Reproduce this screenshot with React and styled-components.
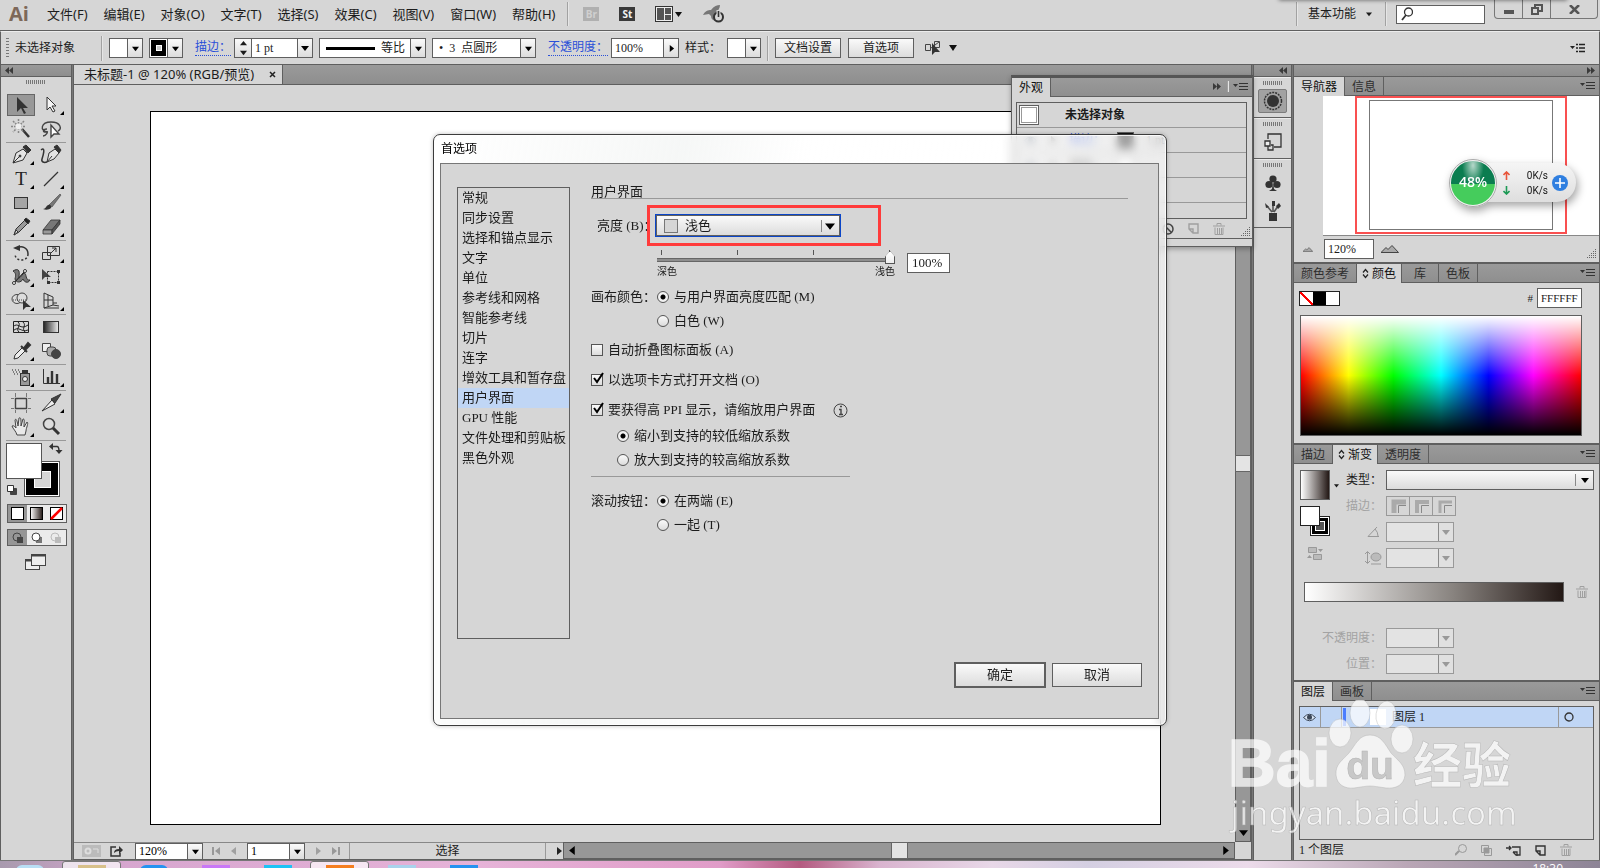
import React from "react";
import styled, { createGlobalStyle, css } from "styled-components";

const GlobalStyle = createGlobalStyle`
    * { box-sizing: border-box; }
    body {
        margin: 0;
        background: #d6d6d6;
        color: #1c1c1c;
        font: 12px/16px "Liberation Serif", "Noto Sans CJK SC", serif;
        overflow: hidden;
    }
    button, input, select { font: inherit; color: inherit; margin: 0; padding: 0; border-radius: 0; }
    button { background: none; border: 0; }
    svg { display: block; flex: none; }
`;

const line = "#5f5f5f";
const ui = `"Noto Sans", "Noto Sans CJK SC", sans-serif`;
const button = "linear-gradient(#fafafa, #dcdcdc)";
const bar = "linear-gradient(#9a9a9a, #8e8e8e)";

/* ---------- frame ---------- */

const Window = styled.div`
    position: relative;
    display: flex;
    flex-direction: column;
    min-height: 100vh;
    overflow: hidden;
    white-space: nowrap;
`;

const MenuBar = styled.header`
    display: flex;
    align-items: center;
    height: 31px;
    padding: 0 2px 2px 9px;
    border-bottom: 1px solid ${line};
    font-family: ${ui};
    font-size: 13px;
`;

const Logo = styled.b`
    width: 38px;
    color: #7d6859;
    font: bold 20px/28px "Open Sans", sans-serif;
`;

const Menus = styled.nav`
    display: flex;
    gap: 16px;
    margin-right: 12px;
`;

const Divider = styled.span`
    width: 2px;
    height: ${p => p.$h || 24}px;
    margin-left: ${p => p.$gap || 0}px;
    border-left: 1px solid #a2a2a2;
    border-right: 1px solid #e6e6e6;
`;

const Badge = styled.span`
    width: 16px;
    height: 14px;
    background: ${p => (p.$off ? "#b0b0b0" : "#3a3a3a")};
    color: ${p => (p.$off ? "#d0d0d0" : "#f2f2f2")};
    font: bold 10px/14px "Open Sans", sans-serif;
    text-align: center;
`;

const AppIcons = styled.div`
    display: flex;
    align-items: center;
    gap: 20px;
    margin-left: 14px;
    flex: 1;
`;

const Workspace = styled.button`
    display: flex;
    align-items: center;
    gap: 10px;
    padding: 0 13px 0 10px;
    font-size: 12px;
`;

const Search = styled.label`
    display: flex;
    align-items: center;
    width: 89px;
    height: 19px;
    margin: 0 9px;
    padding: 0 4px;
    border: 1px solid ${line};
    background: #fff;
    input { width: 60px; border: 0; outline: 0; }
`;

const WindowButtons = styled.div`
    display: flex;
    align-self: flex-start;
    height: 19px;
    border: 1px solid #777;
    border-top: 0;
    border-radius: 0 0 4px 4px;
    button { width: 28px; display: grid; place-items: center; border-right: 1px solid #777; }
    button:last-child { width: 46px; border: 0; }
`;

const ControlBar = styled.div`
    display: flex;
    align-items: center;
    height: 34px;
    padding: 0 14px 0 5px;
    border: 1px solid ${line};
    border-top-color: #ececec;
`;

const Grip = styled.span`
    width: ${p => (p.$v ? 3 : 20)}px;
    height: ${p => (p.$v ? 20 : 4)}px;
    background: repeating-linear-gradient(${p => (p.$v ? "180deg" : "90deg")}, #777 0 1px, transparent 1px ${p => (p.$v ? 3 : 2)}px);
`;

const Field = styled.span`
    display: flex;
    height: 20px;
    width: ${p => (p.$w ? p.$w + "px" : "auto")};
    border: 1px solid ${p => (p.$off ? "#999" : line)};
    background: ${p => (p.$off ? "#e3e3e3" : "#fff")};
    input { flex: 1; min-width: 0; width: 20px; border: 0; outline: 0; background: none; padding: 0 3px; }
`;

const Drop = styled.button`
    display: grid;
    place-items: center;
    width: 15px;
    height: 100%;
    border-left: 1px solid ${p => (p.$off ? "#8a8a8a" : line)};
    background: ${p => (p.$off ? "#e0e0e0" : button)};
    color: ${p => (p.$off ? "#999" : "#000")};
`;

const Stepper = styled.span`
    width: 17px;
    display: grid;
    place-items: center;
    align-content: space-evenly;
    border-right: 1px solid ${line};
    background: ${button};
`;

const Swatch = styled.span`
    flex: 1;
    display: grid;
    place-items: center;
    background: ${p => (p.$stroke ? "#000" : "#fff")};
    border: ${p => (p.$stroke ? "1px solid #fff" : 0)};
`;

const BlueLink = styled.a`
    color: #2a50d8;
    text-decoration: none;
    border-bottom: 1px dotted #2a50d8;
    line-height: 15px;
`;

const PushButton = styled.button`
    width: ${p => p.$w || 66}px;
    height: ${p => p.$h || 20}px;
    border: ${p => (p.$strong ? 2 : 1)}px solid ${line};
    background: ${button};
    font-size: ${p => p.$size || 12}px;
`;

const Controls = styled.div`
    display: flex;
    align-items: center;
    flex: 1;
    gap: 6px;
    > ${BlueLink} { margin: 0 -3px 0 6px; }
    > ${PushButton} { margin-right: 1px; }
`;

const Profile = styled.span`
    flex: 1;
    display: flex;
    align-items: center;
    gap: 6px;
    padding-left: 6px;
    line-height: 18px;
`;

const Main = styled.main`
    display: flex;
    flex: 1;
    border: solid ${line};
    border-width: 0 1px;
`;

const Split = styled.div`
    width: 3px;
    border: solid ${line};
    border-width: 0 1px;
    background: #777;
`;

const DockHead = styled.div`
    display: flex;
    align-items: center;
    justify-content: ${p => (p.$end ? "flex-end" : "flex-start")};
    height: 12px;
    padding: 0 4px;
    border-bottom: 1px solid ${line};
    background: ${bar};
`;

/* ---------- tools ---------- */

const ToolBox = styled.aside`
    width: 70px;
    display: flex;
    flex-direction: column;
`;

const ToolGroup = styled.div`
    display: grid;
    grid-template-columns: 30px 30px;
    justify-content: center;
    margin: 0 5px;
    border-bottom: 1px solid #999;
    padding-bottom: 1px;
`;

const ToolButton = styled.button`
    position: relative;
    height: 24px;
    display: grid;
    place-items: center;
    ${p => p.$on && css`
        background: #989898;
        box-shadow: inset 0 0 0 1px #666;
        height: 22px;
        margin: 1px;
    `}
    &::after {
        content: "";
        display: ${p => (p.$more ? "block" : "none")};
        position: absolute;
        right: 2px;
        bottom: 2px;
        border: 2px solid #000;
        border-top-color: transparent;
        border-left-color: transparent;
    }
`;

const FillStroke = styled.div`
    height: 58px;
    margin: 2px 5px 0;
`;

const Modes = styled.div`
    display: flex;
    height: ${p => p.$h}px;
    margin: 3px 4px 3px 6px;
    border: 1px solid ${line};
    background: #ebebeb;
    button { flex: 1; display: grid; place-items: center; }
    button:first-child { background: #969696; }
`;

const Screen = styled.button`
    margin: 5px auto 0;
`;

const GripRow = styled.div`
    display: flex;
    justify-content: center;
    padding: 3px 0 ${p => p.$b || 0}px;
`;

/* ---------- document ---------- */

const Document = styled.section`
    display: flex;
    flex-direction: column;
    flex: 1;
    min-width: 0;
`;

const DocTabs = styled.div`
    display: flex;
    height: 20px;
    border-bottom: 1px solid ${line};
    background: ${bar};
`;

const DocTab = styled.div`
    display: flex;
    align-items: center;
    justify-content: space-between;
    width: 209px;
    height: 19px;
    padding: 0 6px 0 10px;
    border-right: 1px solid ${line};
    background: #d6d6d6;
    font: 13px/19px ${ui};
`;

const CanvasRow = styled.div`
    display: flex;
    flex: 1;
`;

const Canvas = styled.div`
    flex: 1;
    display: flex;
    padding: 26px 74px 17px 76px;
`;

const Artboard = styled.div`
    flex: 1;
    border: 1px solid #000;
    background: #fff;
`;

const Scrollbar = styled.div`
    display: flex;
    flex-direction: ${p => (p.$v ? "column" : "row")};
    align-items: center;
    ${p => (p.$v ? "width: 16px;" : "flex: 1;")}
    border: 1px solid ${line};
    background: #979797;
    padding: ${p => (p.$v ? "13px 0 4px" : "0 4px")};
    i {
        background: #e4e4e4;
        outline: 1px solid #666;
        width: ${p => (p.$v ? 14 : 15)}px;
        height: 15px;
        margin: ${p => (p.$v ? "auto 0" : "0 auto")};
    }
`;

const Status = styled.div`
    display: flex;
    height: 18px;
    border-bottom: 1px solid ${line};
`;

const StatusInfo = styled.div`
    display: flex;
    align-items: center;
    width: 489px;
    padding-left: 8px;
    border-top: 1px solid #888;
    gap: 9px;
    color: #a0a0a0;
    ${Field} { height: 17px; color: #000; }
    ${Field}:first-of-type { margin-left: 2px; }
`;

const StatusText = styled.span`
    flex: 1;
    text-align: center;
    color: #222;
    border: solid #999;
    border-width: 0 1px;
`;

const Corner = styled.div`
    width: 16px;
`;

/* ---------- panels ---------- */

const IconDock = styled.aside`
    width: 37px;
`;

const IconGroup = styled.div`
    display: flex;
    flex-direction: column;
    align-items: center;
    gap: 4px;
    padding: 3px 0 4px;
    border-bottom: 1px solid ${line};
    border-top: 1px solid #ebebeb;
    button { width: 29px; height: 24px; display: grid; place-items: center; border-radius: 2px; }
    button.on { background: #a2a2a2; border: 1px solid #7c7c7c; }
`;

const Panels = styled.aside`
    width: 305px;
    display: flex;
    flex-direction: column;
`;

const Panel = styled.section`
    display: flex;
    flex-direction: column;
    ${p => p.$grow && "flex: 1;"}
    border-bottom: ${p => (p.$grow ? 0 : 2)}px solid ${line};
`;

const TabBar = styled.div`
    display: flex;
    align-items: flex-start;
    height: 19px;
    background: ${bar};
    box-shadow: inset 0 -1px ${line};
    font: 12px/17px ${ui};
    > svg { margin: 5px 4px 0 auto; }
`;

const Tab = styled.button`
    display: flex;
    align-items: center;
    gap: 3px;
    height: ${p => (p.$on ? 19 : 18)}px;
    padding: 0 ${p => p.$pad || 7}px;
    border-right: 1px solid ${line};
    background: ${p => (p.$on ? "#d6d6d6" : "transparent")};
    color: ${p => (p.$on ? "#111" : "#2e2e2e")};
`;

const NavView = styled.div`
    margin-left: 29px;
    padding: 0 32px 1px;
    height: 140px;
    background: #fff;
    border-bottom: 1px solid #888;
    > div { height: 138px; border: 2px solid #f95050; padding: 2px 12px; }
    > div > div { height: 130px; border: 1px solid #777; }
`;

const NavZoom = styled.div`
    display: flex;
    align-items: center;
    gap: 7px;
    height: 26px;
    padding: 0 2px 0 9px;
    > svg:first-child { margin-right: 4px; }
    > svg:last-child { margin: 10px 0 0 auto; }
`;

const Between = styled.div`
    display: flex;
    justify-content: space-between;
    align-items: center;
`;

const ColorBody = styled.div`
    padding: 5px 17px 7px 6px;
`;

const Chips = styled.span`
    display: flex;
    border: 1px solid #222;
    width: 41px;
    height: 15px;
    margin-left: -1px;
    span { flex: 1; }
    span:nth-child(1) { background: linear-gradient(-45deg, #fff 44%, #f00 44% 56%, #fff 56%); transform: scaleX(-1); }
    span:nth-child(2) { background: #000; }
    span:nth-child(3) { background: #fff; }
`;

const Hex = styled.label`
    display: flex;
    align-items: center;
    gap: 4px;
    font-size: 11px;
`;

const Spectrum = styled.div`
    height: 121px;
    margin-top: 7px;
    border: 1px solid ${line};
    background:
        linear-gradient(#fff, rgba(255, 255, 255, 0) 50%),
        linear-gradient(rgba(0, 0, 0, 0) 50%, #000),
        linear-gradient(90deg, #f00, #ff0 17%, #0f0 33%, #0ff 50%, #00f 67%, #f0f 83%, #f00);
`;

const GradientBody = styled.div`
    padding: 6px 5px 6px 6px;
`;

const GradientTop = styled.div`
    display: flex;
    margin-bottom: 14px;
`;

const GradientSide = styled.div`
    width: 40px;
    display: flex;
    flex-direction: column;
    gap: 6px;
`;

const GradientSwatch = styled.div`
    display: flex;
    align-items: center;
    gap: 4px;
    span { width: 30px; height: 30px; border: 1px solid ${line}; background: linear-gradient(90deg, #fff, #231815); }
`;

const Rows = styled.div`
    flex: 1;
    display: flex;
    flex-direction: column;
    gap: 6px;
`;

const Row = styled.label`
    display: flex;
    align-items: center;
    gap: 4px;
    height: 20px;
    color: ${p => (p.$off ? "#a3a3a3" : "#1c1c1c")};
    > span:first-child { width: ${p => p.$label || 42}px; display: flex; justify-content: flex-end; }
`;

const SelectWrap = styled.span`
    position: relative;
    display: flex;
    align-items: center;
    flex: ${p => (p.$w ? "none" : 1)};
    width: ${p => (p.$w ? p.$w + "px" : "auto")};
    select {
        appearance: none;
        width: 100%;
        height: ${p => p.$h || 20}px;
        border: 1px solid ${line};
        outline: ${p => (p.$focus ? "1px solid #0b46c8" : 0)};
        background: ${button};
        padding-left: ${p => (p.$focus ? 28 : 4)}px;
    }
    > svg { position: absolute; right: 5px; }
    > i { position: absolute; left: 8px; width: 14px; height: 14px; border: 1px solid #777; background: #d6d6d6; }
    &::after { content: ""; position: absolute; right: 18px; height: 12px; border-left: 1px solid #888; }
`;

const StrokeButtons = styled.span`
    display: flex;
    border: 1px solid #999;
    button { width: 22px; height: 18px; display: grid; place-items: center; }
    button + button { width: 23px; border-left: 1px solid #999; }
`;

const Ramp = styled.div`
    display: flex;
    align-items: center;
    gap: 12px;
    padding: 0 6px 0 4px;
    margin-bottom: 26px;
    span { flex: 1; height: 20px; border: 1px solid ${line}; background: linear-gradient(90deg, #fff, #898480 57%, #231815); }
`;

const LayersBody = styled.div`
    flex: 1;
    display: flex;
    flex-direction: column;
    padding: 5px 5px 0;
`;

const LayerList = styled.div`
    flex: 1;
    border: 1px solid ${line};
`;

const Layer = styled.div`
    display: flex;
    align-items: center;
    height: 21px;
    padding-left: 3px;
    background: #c0d6f5;
    border-bottom: 1px solid #999;
    > i { width: 3px; height: 18px; background: #4a7dff; margin: 0 24px 0 1px; }
    > b { width: 16px; height: 16px; background: #fff; margin-right: 6px; }
    > span { flex: 1; }
`;

const LayerCell = styled.div`
    width: ${p => p.$w}px;
    height: 20px;
    display: flex;
    align-items: center;
    padding-left: ${p => p.$pad || 0}px;
    border: solid #999;
    border-width: ${p => (p.$left ? "0 0 0 1px" : "0 1px 0 0")};
`;

const LayerFoot = styled.div`
    display: flex;
    align-items: center;
    height: 20px;
    padding-right: 22px;
    gap: 14px;
    color: #a0a0a0;
    > span { flex: 1; color: #222; }
`;

/* ---------- appearance panel ---------- */

const Floating = styled.section`
    position: absolute;
    top: 75px;
    right: 347px;
    width: 242px;
    border: 1px solid ${line};
    border-top: 3px solid #555;
    background: #d6d6d6;
    box-shadow: 0 2px 5px rgba(0, 0, 0, .3);
`;

const AppearanceList = styled.div`
    margin: 5px 5px 0 4px;
    border: 1px solid ${line};
`;

const AppearanceRow = styled.div`
    display: flex;
    align-items: center;
    gap: 12px;
    height: ${p => p.$h || 25}px;
    padding-left: ${p => p.$pad || 2}px;
    border-bottom: ${p => (p.$h ? 0 : 1)}px solid #999;
    > i { width: 20px; height: 20px; background: #fff; border: 1px solid ${line}; box-shadow: inset 0 0 0 1px #fff, inset 0 0 0 2px #999; margin-right: 14px; }
    > em { width: 17px; height: 17px; border: 1px solid ${line}; background: ${p => p.$paint || "#fff"}; }
`;

const AppearanceFoot = styled.div`
    display: flex;
    align-items: center;
    justify-content: flex-end;
    gap: 14px;
    height: 20px;
    padding-right: 1px;
    border-bottom: 1px solid ${line};
    margin-bottom: 7px;
    > svg:last-child { margin: 6px 0 0 2px; }
`;

const PanelTools = styled.span`
    display: flex;
    align-items: center;
    gap: 6px;
    height: 17px;
    margin-left: auto;
    & + svg { margin-left: 4px; }
`;

const BlueText = styled.span`
    color: #2a50d8;
`;

/* ---------- dialog ---------- */

const Dialog = styled.div`
    position: absolute;
    top: 134px;
    left: 0;
    right: 0;
    width: 734px;
    margin: 0 auto;
    padding: 0 7px 6px 6px;
    border: 1px solid #3c3c3c;
    border-radius: 7px;
    background: linear-gradient(100deg, rgba(255, 255, 255, .85), rgba(242, 244, 243, .7) 30%, rgba(255, 255, 255, .8) 45%, rgba(255, 255, 255, .5));
    backdrop-filter: blur(4px);
    box-shadow: inset 0 0 0 1px rgba(255, 255, 255, .8), 0 0 4px rgba(0, 0, 0, .25);
    font-size: 13px;
`;

const DialogTitle = styled.h1`
    margin: 0;
    padding-left: 1px;
    font: 12px/28px ${ui};
    color: #000;
`;

const DialogBody = styled.div`
    display: flex;
    height: 556px;
    padding: 23px 16px 30px;
    border: 1px solid #777;
    background: #d6d6d6;
`;

const Sections = styled.ul`
    width: 113px;
    height: 452px;
    margin: 0 21px 0 0;
    padding: 0;
    border: 1px solid ${line};
    list-style: none;
    li { height: 20px; line-height: 20px; padding-left: 4px; }
    li[aria-current] { background: #c0d6f5; }
`;

const Form = styled.form`
    flex: 1;
    display: flex;
    flex-direction: column;
`;

const Legend = styled.h2`
    margin: -5px 14px 6px 0;
    height: 17px;
    font: inherit;
    line-height: 20px;
    border-bottom: 1px solid #999;
`;

const Line = styled.div`
    display: flex;
    align-items: center;
    height: 24px;
    padding-left: ${p => p.$indent || 0}px;
    margin-top: ${p => p.$top || 0}px;
    > span:first-child { width: 66px; }
`;

const Brightness = styled.div`
    display: flex;
    align-items: center;
    height: 41px;
    padding-left: 6px;
    > label { width: 50px; }
`;

const Highlight = styled.div`
    width: 234px;
    height: 41px;
    padding: 7px 6px;
    border: 3px solid #ff3b3b;
`;

const SliderRow = styled.div`
    display: flex;
    margin: 3px 0 6px 66px;
    gap: 12px;
    ${Field} { margin-top: 4px; }
    ${Field} input { padding: 0 4px; }
`;

const Slider = styled.label`
    display: block;
    width: 238px;
    font-size: 10px;
    line-height: 14px;
    input {
        display: block;
        appearance: none;
        width: 238px;
        height: 15px;
        margin-top: 1px;
        background:
            repeating-linear-gradient(90deg, transparent 0 4px, #555 4px 5px, transparent 5px 76px) 0 0 / 100% 5px no-repeat,
            linear-gradient(#666 1px, #8e8e8e 1px 3px, #666 3px) 0 8px / 100% 4px no-repeat;
    }
    input::-webkit-slider-thumb {
        appearance: none;
        width: 10px;
        height: 13px;
        background: linear-gradient(#fff, #eee) content-box, #555;
        padding: 1px;
        clip-path: polygon(50% 0, 100% 45%, 100% 100%, 0 100%, 0 45%);
    }
`;

const Radio = styled.input.attrs({ type: "radio" })`
    appearance: none;
    width: 12px;
    height: 12px;
    border: 1px solid #555;
    border-radius: 6px;
    background: ${button};
    &:checked { background: radial-gradient(#000 0 2px, #f2f2f2 3px); }
`;

const CheckBox = styled.span`
    position: relative;
    display: flex;
    input { appearance: none; width: 12px; height: 12px; border: 1px solid #555; background: ${button}; }
    svg { position: absolute; left: 1px; top: -2px; }
`;

const Choice = styled.label`
    display: flex;
    align-items: center;
    gap: 5px;
    margin-right: 18px;
`;

const Rule = styled.hr`
    width: 259px;
    margin: 4px 0 0;
    border: 0;
    border-top: 1px solid #999;
`;

const Actions = styled.div`
    display: flex;
    align-items: center;
    justify-content: flex-end;
    gap: 6px;
    margin-top: auto;
`;

/* ---------- overlays ---------- */

const Meter = styled.div`
    position: absolute;
    top: 158px;
    right: 24px;
    display: flex;
    align-items: center;
    width: 127px;
    height: 49px;
    filter: drop-shadow(2px 4px 4px rgba(0, 0, 0, .35));
    font: 10px/15px "Roboto", sans-serif;
`;

const MeterBall = styled.b`
    position: relative;
    width: 48px;
    height: 48px;
    border: 2px solid #f2f2f2;
    border-radius: 24px;
    outline: 1px solid #aaa;
    outline-offset: -1px;
    background: radial-gradient(ellipse at 50% 10%, rgba(255, 255, 255, .7), transparent 35%), linear-gradient(#0b7d50 52%, #45cc5c 52%);
    color: #fff;
    font: 600 14px/42px "Open Sans", sans-serif;
    text-align: center;
`;

const MeterPill = styled.div`
    flex: 1;
    display: flex;
    align-items: center;
    height: 39px;
    margin-left: -20px;
    padding: 1px 8px 0 26px;
    border-radius: 0 20px 20px 0;
    background: linear-gradient(#f5f5f5, #dedede);
    gap: 4px;
    > div { flex: 1; }
`;

const Speed = styled.div`
    display: flex;
    justify-content: space-between;
    align-items: center;
    color: #111;
`;

const Plus = styled.button`
    width: 16px;
    height: 16px;
    border-radius: 8px;
    background: #2f7fe0;
    display: grid;
    place-items: center;
`;

const Watermark = styled.div`
    position: absolute;
    right: 82px;
    bottom: 24px;
    width: 290px;
    opacity: .72;
    pointer-events: none;
`;

const TopShade = styled.div`
    position: absolute;
    top: -4px;
    right: 33px;
    width: 288px;
    height: 4px;
    box-shadow: 0 0 4px rgba(0, 0, 0, .6);
`;

const Taskbar = styled.footer`
    display: flex;
    height: 8px;
    overflow: hidden;
    border-top: 1px solid #777;
    background: linear-gradient(90deg, #a89aae, #d7a6cf 8%, #e6b3d8 30%, #e09cc8 45%, #b45a80 50%, #d9b4cf 55%, #e8d8e8 62%, #d4cfe2 68%, #ecdbea 78%, #b9a6b6 88%, #8d8496);
    color: #fff;
    font: 12px/15px "Open Sans", sans-serif;
`;

const TaskItem = styled.span`
    width: 59px;
    height: 12px;
    margin-right: 3px;
    border: 1px solid ${p => (p.$on ? "#777" : "transparent")};
    border-radius: 3px 3px 0 0;
    background: ${p => (p.$on ? "rgba(255, 255, 255, .7)" : "none")};
    display: flex;
    justify-content: center;
    align-items: flex-start;
    i { margin-top: 3px; width: 28px; height: 12px; background: ${p => p.$c}; border-radius: ${p => (p.$round ? 14 : 0)}px; }
`;

const Clock = styled.span`
    margin-left: auto;
    padding-right: 37px;
`;

/* ---------- drawings ---------- */

const Caret = ({ w = 8, color = "currentColor", dir = "down" }) => {
    const turn = { down: 0, right: -90, left: 90, up: 180 }[dir];
    return (
        <svg width={w} height={w} viewBox="0 0 8 8">
            <path d="M0 2h8L4 7z" fill={color} transform={`rotate(${turn} 4 4)`} />
        </svg>
    );
};

const Chevrons = ({ flip }) => (
    <svg width="8" height="7" viewBox="0 0 8 7">
        <path d="M4 0v7L0 3.5zM8 0v7L4 3.5z" fill="#3a3a3a" transform={flip ? "matrix(-1 0 0 1 8 0)" : undefined} />
    </svg>
);

const PanelMenu = () => (
    <svg width="15" height="9" viewBox="0 0 15 9">
        <path d="M0 1h5L2.500 4z" fill="#333" />
        <path d="M6 .5h9M6 3.500h9M6 6.500h9" stroke="#333" />
    </svg>
);

const Corners = () => (
    <svg width="10" height="10" viewBox="0 0 10 10" fill="#666">
        {[0, 1, 2, 3, 4].map(r => Array.from({ length: r + 1 }, (_, i) => (
            <rect key={`${r}-${i}`} x={8 - i * 2} y={r * 2} width="1" height="1" />
        )))}
    </svg>
);

const Trash = ({ s = 12, color = "#a0a0a0" }) => (
    <svg width={s} height={s} viewBox="0 0 12 12" fill="none" stroke={color}>
        <path d="M0 3h12M4 2.500V.5h4v2M2 4.500V11.500h8V4.500M4.500 5v6M6.500 5v6M8.500 5v6" />
    </svg>
);

const NewIcon = ({ color = "#333" }) => (
    <svg width="11" height="11" viewBox="0 0 11 11" fill="none" stroke={color} strokeWidth="1.400">
        <path d="M1 1h9v9H5L1 6zM1 6h4v4" />
    </svg>
);

const Eye = () => (
    <svg width="13" height="9" viewBox="0 0 13 9">
        <path d="M.5 4.500Q6.500-2 12.500 4.500 6.500 11 .5 4.500z" fill="#d8e4f4" stroke="#3b4656" />
        <circle cx="6.500" cy="4.300" r="2.500" fill="#3b4656" />
    </svg>
);

const UpDown = () => (
    <svg width="7" height="11" fill="none" stroke="#222" strokeWidth="1.200">
        <path d="M1 4.500L3.500 1.500 6 4.500M1 6.500L3.500 9.500 6 6.500" />
    </svg>
);

const Mountains = ({ w, h }) => (
    <svg width={w} height={h} viewBox="0 0 18 8"><path d="M0 7.500l5-5 2 2L11 .5l6.500 7z" fill="#aaa" stroke="#444" /></svg>
);

const Arrow = ({ color, down }) => (
    <svg width="7" height="9" viewBox="0 0 7 9" fill="none" stroke={color} strokeWidth="1.600">
        <path d={down ? "M3.500 0v8M.5 5l3 3 3-3" : "M3.500 9V1M.5 4l3-3 3 3"} />
    </svg>
);

const toolShapes = {
    select: <path d="M8 3v15l4-4 3 6 2-1-3-5h5z" fill="#333" />,
    direct: <path d="M8 4v13l3-3 3 5 2-1-3-5h4z" fill="#f5f5f5" stroke="#333" />,
    wand: <g><path d="M13 12l7 8" stroke="#333" strokeWidth="2.500" /><path d="M9.500 2v15M2 9.500h15M4 4l11 11M15 4L4 15" stroke="#888" strokeWidth="1.500" strokeDasharray="2 1" /><circle cx="9.500" cy="9.500" r="3" fill="#eee" /></g>,
    lasso: <g fill="none" stroke="#444" strokeWidth="1.400"><path d="M9 15C0 14 2 5 12 5s11 7 7 9M8 12c-5 0-4 4-1 3s0 4-3 4" /><path d="M12 8v12l3-3h5z" fill="#fff" /></g>,
    pen: <g stroke="#333" fill="#e4e4e4"><path d="M4 20l3-10 7-4 4 4-4 7z" /><path d="M4 20l6-6" /><circle cx="11" cy="13" r="1" fill="#333" /><path d="M14 4l3-2 5 5-3 3z" fill="#333" /></g>,
    curve: <g stroke="#333" fill="#e4e4e4"><path d="M2 7c5-4 2 6 1 9s2 4 5 3" fill="none" strokeWidth="1.500" /><path d="M8 19l2-9 6-4 4 4-5 6z" /><path d="M8 19l5-6" /><path d="M15 4l3-2 4 5-2 3z" fill="#333" /></g>,
    line: <path d="M5 19L19 5" stroke="#333" strokeWidth="1.300" />,
    rect: <rect x="5.500" y="6.500" width="13" height="11" fill="#a5a5a5" stroke="#333" />,
    brush: <g><path d="M10 14L21 3l1 1-9 12z" fill="#777" stroke="#444" strokeWidth=".6" /><path d="M4 18c4 0 3-5 7-4 4 3-2 6-7 4z" fill="#333" /></g>,
    pencil: <g stroke="#333"><path d="M5 20l2-6L16 5l3 3-9 9z" fill="#999" /><path d="M15 5l2-2 4 3-2 3z" fill="#222" /><path d="M5 20l2-5 2 2z" fill="#eee" /></g>,
    eraser: <g stroke="#333" strokeWidth=".8"><path d="M4 15L12 5h9l-8 10z" fill="#777" /><path d="M4 15h9v4H4z" fill="#999" /><path d="M13 15l8-10v4l-8 10z" fill="#555" /></g>,
    rotate: <g fill="none" stroke="#333" strokeWidth="1.500"><path d="M8 7c5-3 11 0 11 6" /><path d="M19 13c0 8-13 8-13 0" strokeDasharray="2 2" /><path d="M4 7l7-3v6z" fill="#333" stroke="none" /></g>,
    scale: <g fill="none" stroke="#333"><path d="M3.500 11.500h8v7h-8z" /><path d="M8.500 5.500h12v9h-12z" /><path d="M12 12l5-5M13 7h4v4" /></g>,
    warp: <g fill="none" stroke="#333"><path d="M4 6c5-3 7-1 6 5 0 5 3-2 5-3 3 0 1 8 6 7-2 4-6 2-7-1-2 4-7 4-8 0 1-4 1-6-2-8z" fill="#777" /><path d="M4 19L16 6" stroke="#111" /><circle cx="16" cy="6" r="1.500" fill="#fff" /><circle cx="5" cy="18" r="1.500" fill="#fff" /></g>,
    free: <g><path d="M3 4v11l3-3h6z" fill="#444" /><path d="M8.500 6.500h11v11h-11z" fill="none" stroke="#333" strokeDasharray="2 1" /><path d="M8 16h3v3H8zM18 5h3v3h-3zM18 16h3v3h-3z" fill="#333" /></g>,
    shape: <g fill="#ddd" stroke="#444"><ellipse cx="8" cy="10" rx="5" ry="4.500" /><ellipse cx="13" cy="9" rx="5" ry="5" /><path d="M4 11h13" strokeDasharray="1 1" /><path d="M14 11v10l3-3h5z" fill="#333" stroke="none" /></g>,
    persp: <g fill="none" stroke="#333"><path d="M5 4v15l15 0M5 4l9 4v8l-9 3M9 6v11M5 11h9M14 16l6 1M14 14h4" /></g>,
    mesh: <g fill="none" stroke="#222"><path d="M4.500 6.500h15v11h-15z" /><path d="M4 12c5-6 7 4 15-2M4 16c6-6 8 2 15-1M9 7c4 3-3 7 1 10M14 7c4 4-2 6 2 10" /></g>,
    grad: <g><defs><linearGradient id="toolGrad"><stop stopColor="#222" /><stop offset="1" stopColor="#eee" /></linearGradient></defs><rect x="4.500" y="6.500" width="15" height="11" fill="url(#toolGrad)" stroke="#333" /></g>,
    drop: <g stroke="#333"><path d="M5 20l1-4 8-8 3 3-8 8z" fill="#eee" /><path d="M12 7l6 6M15 9l4-5 2 2-4 4z" fill="#222" strokeWidth="2" /></g>,
    blend: <g stroke="#444"><path d="M3.500 4.500h8v8h-8z" fill="#eee" /><rect x="8" y="8" width="9" height="9" rx="3" fill="#aaa" /><circle cx="17" cy="15" r="4.500" fill="#444" /></g>,
    spray: <g><rect x="11.500" y="8.500" width="9" height="12" fill="#999" stroke="#333" /><path d="M13 5h6v3h-6z" fill="#333" /><circle cx="16" cy="14" r="2.500" fill="#eee" stroke="#333" /><path d="M3 5h9M4 7h8M5 9h5" stroke="#222" strokeDasharray="1 2" /></g>,
    chart: <g fill="none" stroke="#333"><path d="M4.500 4v14.500H21" /><path d="M9 18v-6M13 18V6M18 18V9" strokeWidth="2.400" /></g>,
    art: <g fill="none" stroke="#444"><path d="M6.500 7.500h11v10h-11z" strokeWidth="1.400" /><path d="M6.500 2v4M17.500 2v4M6.500 19v3M17.500 19v3M2 7.500h3M19 7.500h3M2 17.500h3M19 17.500h3" stroke="#777" /></g>,
    slice: <g stroke="#333"><path d="M3 20L13 9l3 4z" fill="#eee" /><path d="M12 8l10-5-6 9z" fill="#444" /></g>,
    hand: <path d="M8 20c-1-4-4-6-5-9 2-1 3 1 4 2L6 5c1-2 2 0 3 6l1-8c2-1 2 1 2 8l2-7c2 0 1 2 1 8l3-5c2 1-1 6-1 9l-1 4z" fill="#e9e9e9" stroke="#444" />,
    zoom: <g><circle cx="10" cy="9" r="5.500" fill="#ddd" stroke="#444" strokeWidth="1.500" /><path d="M14 13l6 6" stroke="#333" strokeWidth="3" /></g>
};

const ToolIcon = ({ name }) => (
    <svg width="24" height="24" viewBox="0 0 24 24">
        {name === "type"
            ? <text x="12" y="18" textAnchor="middle" fontFamily="Liberation Serif" fontSize="19" fill="#222">T</text>
            : toolShapes[name]}
    </svg>
);

const toolGroups = [
    [["select", "选择"], ["direct", "直接选择", 1], ["wand", "魔棒"], ["lasso", "套索"]],
    [["pen", "钢笔", 1], ["curve", "曲率"], ["type", "文字", 1], ["line", "直线段", 1], ["rect", "矩形", 1], ["brush", "画笔", 1], ["pencil", "铅笔", 1], ["eraser", "橡皮擦", 1]],
    [["rotate", "旋转", 1], ["scale", "比例缩放", 1], ["warp", "宽度", 1], ["free", "自由变换"], ["shape", "形状生成器", 1], ["persp", "透视网格", 1]],
    [["mesh", "网格"], ["grad", "渐变"], ["drop", "吸管", 1], ["blend", "混合"]],
    [["spray", "符号喷枪", 1], ["chart", "柱形图", 1]],
    [["art", "画板"], ["slice", "切片", 1], ["hand", "抓手", 1], ["zoom", "缩放"]]
];

const menus = ["文件(F)", "编辑(E)", "对象(O)", "文字(T)", "选择(S)", "效果(C)", "视图(V)", "窗口(W)", "帮助(H)"];

const sections = ["常规", "同步设置", "选择和锚点显示", "文字", "单位", "参考线和网格", "智能参考线", "切片", "连字",
    "增效工具和暂存盘", "用户界面", "GPU 性能", "文件处理和剪贴板", "黑色外观"];

const Tools = () => (
    <ToolBox>
        <DockHead><Chevrons /></DockHead>
        <GripRow $b={9}><Grip /></GripRow>
        {toolGroups.map((group, g) => (
            <ToolGroup key={g}>
                {group.map(([name, label, more]) => (
                    <ToolButton key={name} aria-label={label} $on={name === "select"} $more={more}>
                        <ToolIcon name={name} />
                    </ToolButton>
                ))}
            </ToolGroup>
        ))}
        <FillStroke>
            <svg width="60" height="56" viewBox="0 0 60 56">
                <rect x="18.500" y="18.500" width="35" height="35" fill="#fff" stroke="#555" />
                <rect x="20" y="20" width="32" height="32" />
                <rect x="28.500" y="28.500" width="16" height="16" fill="#d6d6d6" stroke="#fff" />
                <rect x=".5" y=".5" width="35" height="35" fill="#fff" stroke="#555" />
                <path d="M46 3.500h5q2 0 2 5" fill="none" stroke="#333" strokeWidth="1.500" />
                <path d="M47 0v7l-4-3.500zM49.500 7h7L53 11z" fill="#333" />
                <path d="M4.500 45.500h6v6h-6z" fill="#444" stroke="#444" />
                <path d="M1.500 42.500h6v6h-6z" fill="#fff" stroke="#333" />
            </svg>
        </FillStroke>
        <Modes $h={19}>
            <button aria-label="颜色"><svg width="13" height="13"><rect x=".5" y=".5" width="12" height="12" fill="#fff" stroke="#000" /></svg></button>
            <button aria-label="渐变"><svg width="13" height="13"><defs><linearGradient id="modeGrad"><stop stopColor="#fff" /><stop offset="1" stopColor="#231815" /></linearGradient></defs><rect x=".5" y=".5" width="12" height="12" fill="url(#modeGrad)" stroke="#000" /></svg></button>
            <button aria-label="无"><svg width="13" height="13"><rect x=".5" y=".5" width="12" height="12" fill="#fff" stroke="#000" /><path d="M1 12L12 1" stroke="#f00" strokeWidth="2.500" /></svg></button>
        </Modes>
        <Modes $h={17}>
            {["#444", "#777", "#bbb"].map((c, i) => (
                <button key={c} aria-label={["正常绘图", "背面绘图", "内部绘图"][i]}>
                    <svg width="12" height="12">
                        <rect x="5" y="5" width="6" height="6" fill={c} />
                        <circle cx="5" cy="5" r="4" fill={i === 1 ? "#fff" : "none"} stroke={i === 2 ? "#bbb" : "#444"} />
                    </svg>
                </button>
            ))}
        </Modes>
        <Screen aria-label="屏幕模式">
            <svg width="22" height="17" fill="#eee" stroke="#444">
                <rect x=".5" y="5.500" width="14" height="10" /><path d="M0 6.500h15" strokeWidth="2" />
                <rect x="6.500" y=".5" width="14" height="11" /><path d="M6 1.500h15" strokeWidth="2" />
            </svg>
        </Screen>
    </ToolBox>
);

const TopBars = () => (
    <>
        <MenuBar>
            <Logo>Ai</Logo>
            <Menus>{menus.map(m => <span key={m}>{m}</span>)}</Menus>
            <Divider />
            <AppIcons>
                <Badge $off>Br</Badge>
                <Badge>St</Badge>
                <svg width="28" height="16" viewBox="0 0 28 16">
                    <rect x=".5" y=".5" width="17" height="15" fill="#eee" stroke="#333" />
                    <path d="M2 2h7v12H2zM10 2h6v6h-6zM10 9h6v5h-6z" fill="#555" />
                    <path d="M20 6h7l-3.500 5z" fill="#111" />
                </svg>
                <svg width="22" height="18" viewBox="0 0 22 18">
                    <path d="M0 10C2 6 5 5 8 5c3-4 6-5 9-5 0 3-2 6-5 9v7c-3-1-4-3-4-5L6 9z" fill="#777" />
                    <circle cx="15.500" cy="12" r="4.500" fill="#d6d6d6" stroke="#333" strokeWidth="2" />
                    <path d="M15.500 5v8" stroke="#d6d6d6" strokeWidth="4" /><path d="M15.500 6v6" stroke="#333" strokeWidth="1.600" />
                </svg>
            </AppIcons>
            <Divider />
            <Workspace>基本功能<Caret w={6} /></Workspace>
            <Divider />
            <Search>
                <svg width="12" height="14" viewBox="0 0 12 14" fill="none" stroke="#333" strokeWidth="1.300"><circle cx="7.500" cy="5" r="4" /><path d="M5 8l-4 5" strokeWidth="1.800" /></svg>
                <input aria-label="搜索" />
            </Search>
            <WindowButtons>
                <button aria-label="最小化"><svg width="10" height="10"><path d="M0 6h10v4H0z" fill="#555" /></svg></button>
                <button aria-label="还原"><svg width="12" height="11" fill="none" stroke="#555" strokeWidth="2"><path d="M4 4V1h7v6H8M1 4h6v6H1z" /></svg></button>
                <button aria-label="关闭"><svg width="11" height="9" stroke="#555" strokeWidth="2.500"><path d="M1 0l9 9M10 0L1 9" /></svg></button>
            </WindowButtons>
        </MenuBar>
        <ControlBar>
            <Controls>
                <Grip $v />
                <span>未选择对象</span>
                <Divider $h={25} $gap={20} />
                <Field $w={34}><Swatch /><Drop aria-label="填色"><Caret w={7} /></Drop></Field>
                <Field $w={34}>
                    <Swatch $stroke><svg width="6" height="6"><rect x=".5" y=".5" width="5" height="5" fill="#ccc" stroke="#fff" /></svg></Swatch>
                    <Drop aria-label="描边颜色"><Caret w={7} /></Drop>
                </Field>
                <BlueLink href="#stroke">描边：</BlueLink>
                <Field $w={79}>
                    <Stepper><Caret w={7} dir="up" /><Caret w={7} /></Stepper>
                    <input aria-label="描边粗细" defaultValue="1 pt" />
                    <Drop aria-label="粗细列表"><Caret /></Drop>
                </Field>
                <Field $w={107}>
                    <Profile><svg width="49" height="3"><path d="M0 0h49v3H0z" /></svg>等比</Profile>
                    <Drop aria-label="宽度配置"><Caret w={7} /></Drop>
                </Field>
                <Field $w={104}>
                    <Profile>•<span>3</span>点圆形</Profile>
                    <Drop aria-label="画笔定义"><Caret w={7} /></Drop>
                </Field>
                <BlueLink href="#opacity">不透明度：</BlueLink>
                <Field $w={68}><input aria-label="不透明度" defaultValue="100%" /><Drop aria-label="不透明度滑块"><Caret w={7} dir="right" /></Drop></Field>
                <span>样式：</span>
                <Field $w={34}><Swatch /><Drop aria-label="图形样式"><Caret w={7} /></Drop></Field>
                <Divider $h={25} />
                <PushButton>文档设置</PushButton>
                <PushButton>首选项</PushButton>
                <Arrange width="32" height="16" viewBox="0 0 32 16" fill="none" stroke="#444">
                    <path d="M.5 4.500h5v6h-5zM9.500 1.500h5v6h-5zM6 8l8-6" />
                    <path d="M7 3v12l3-3h5z" fill="#333" stroke="none" />
                    <path d="M24 5h8l-4 6z" fill="#111" stroke="none" />
                </Arrange>
            </Controls>
            <svg width="15" height="10" viewBox="0 0 15 10"><path d="M0 3h5L2.500 6z" fill="#222" /><path d="M6 1.500h2M9 1.500h6M6 5h2M9 5h6M6 8.500h2M9 8.500h6" stroke="#222" strokeWidth="1.400" /></svg>
        </ControlBar>
    </>
);

const Arrange = styled.svg`
    margin-left: 4px;
`;

const DocumentArea = () => (
    <Document>
        <DocTabs>
            <DocTab>未标题-1 @ 120% (RGB/预览)
                <button aria-label="关闭文档"><svg width="7" height="7" stroke="#222" strokeWidth="1.500"><path d="M1 1l5 5M6 1L1 6" /></svg></button>
            </DocTab>
        </DocTabs>
        <CanvasRow>
            <Canvas><Artboard /></Canvas>
            <Scrollbar $v><i /><Caret w={9} color="#000" /></Scrollbar>
        </CanvasRow>
        <Status>
            <StatusInfo>
                <svg width="19" height="12" viewBox="0 0 19 12"><rect width="19" height="12" fill="#bbb" /><circle cx="6" cy="6" r="2.500" fill="none" stroke="#ddd" strokeWidth="2" /><path d="M11 4h5v4" fill="none" stroke="#ddd" /></svg>
                <svg width="14" height="12" viewBox="0 0 14 12" fill="none" stroke="#333" strokeWidth="1.500"><path d="M6 2H1v9h9V8" /><path d="M4 8q0-4 5-4V1l4 4-4 4V6Q6 6 4 8z" fill="#333" stroke="none" /></svg>
                <Field $w={68}><input aria-label="缩放" defaultValue="120%" /><Drop aria-label="缩放列表"><Caret w={7} /></Drop></Field>
                <svg width="9" height="8"><path d="M0 0h2v8H0zM8 0v8L3 4z" fill="#999" /></svg>
                <Caret dir="left" />
                <Field $w={58}><input aria-label="画板" defaultValue="1" /><Drop aria-label="画板列表"><Caret w={7} /></Drop></Field>
                <Caret dir="right" />
                <svg width="9" height="8"><path d="M7 0h2v8H7zM1 0v8l5-4z" fill="#999" /></svg>
                <StatusText>选择</StatusText>
                <Caret dir="right" color="#222" />
            </StatusInfo>
            <Scrollbar><Caret w={9} color="#000" dir="left" /><i /><Caret w={9} color="#000" dir="right" /></Scrollbar>
            <Corner />
        </Status>
    </Document>
);

const Dock = () => (
    <IconDock>
        <DockHead $end><Chevrons /></DockHead>
        <IconGroup>
            <Grip />
            <button className="on" aria-label="外观">
                <svg width="20" height="20"><circle cx="10" cy="10" r="6" fill="#333" /><circle cx="10" cy="10" r="8.500" fill="none" stroke="#333" strokeWidth="1.500" strokeDasharray="2 1" /></svg>
            </button>
        </IconGroup>
        <IconGroup>
            <Grip />
            <button aria-label="图形样式">
                <svg width="18" height="18" fill="none" stroke="#333" strokeWidth="1.300"><path d="M4 6V1h13v13h-7M4 10v7h5v-5H7" /><path d="M1 8h5v5H1z" fill="#eee" /></svg>
            </button>
        </IconGroup>
        <IconGroup>
            <Grip />
            <button aria-label="符号">
                <svg width="16" height="17" fill="#333"><circle cx="8" cy="4" r="3.600" /><circle cx="4" cy="9.500" r="3.600" /><circle cx="12" cy="9.500" r="3.600" /><path d="M8 6l1 8 3 2H4l3-2z" /></svg>
            </button>
            <button aria-label="画笔">
                <svg width="16" height="20" viewBox="0 0 16 20" fill="#333"><path d="M4 12h8v8H4z" /><path d="M7 11L2 5M8 11V3M9 11l4-6" stroke="#555" strokeWidth="1.600" /><path d="M0 2l4 4-3 1zM7 0h3v5H7zM11 5l3-3 2 3-3 3z" /></svg>
            </button>
        </IconGroup>
    </IconDock>
);

const OffField = ({ label }) => (
    <Field $w={68} $off><input disabled aria-label={label} /><Drop $off disabled aria-label={label + "列表"}><Caret /></Drop></Field>
);

const RightPanels = () => (
    <Panels>
        <DockHead $end><Chevrons flip /></DockHead>
        <Panel>
            <TabBar><Tab $on>导航器</Tab><Tab>信息</Tab><PanelMenu /></TabBar>
            <NavView><div><div /></div></NavView>
            <NavZoom>
                <Mountains w={10} h={5} />
                <Field $w={50}><input aria-label="导航缩放" defaultValue="120%" /></Field>
                <Mountains w={18} h={8} />
                <Corners />
            </NavZoom>
        </Panel>
        <Panel>
            <TabBar><Tab>颜色参考</Tab><Tab $on $pad={5}><UpDown />颜色</Tab><Tab $pad={12}>库</Tab><Tab>色板</Tab><PanelMenu /></TabBar>
            <ColorBody>
                <Between>
                    <Chips><span /><span /><span /></Chips>
                    <Hex># <Field $w={45}><input aria-label="十六进制" defaultValue="FFFFFF" /></Field></Hex>
                </Between>
                <Spectrum />
            </ColorBody>
        </Panel>
        <Panel>
            <TabBar><Tab>描边</Tab><Tab $on $pad={5}><UpDown />渐变</Tab><Tab>透明度</Tab><PanelMenu /></TabBar>
            <GradientBody>
                <GradientTop>
                    <GradientSide>
                        <GradientSwatch><span /><Caret w={5} /></GradientSwatch>
                        <svg width="30" height="30">
                            <rect x="10.500" y="10.500" width="19" height="19" fill="#fff" stroke="#222" /><rect x="12" y="12" width="16" height="16" />
                            <rect x="15.500" y="15.500" width="9" height="9" fill="#555" stroke="#fff" /><rect x=".5" y=".5" width="19" height="19" fill="#fff" stroke="#222" />
                        </svg>
                        <svg width="24" height="24" fill="#bbb" stroke="#999"><path d="M8.500 5.500h8v5h-8zM13.500 12.500h8v5h-8z" /><path d="M18 7h5l-2.500 3zM7 16h5l-2.500-3z" fill="#999" stroke="none" /></svg>
                    </GradientSide>
                    <Rows>
                        <Row><span>类型：</span><SelectWrap><select><option aria-label="无"></option></select><Caret color="#000" /></SelectWrap></Row>
                        <Row as="div" $off><span>描边：</span>
                            <StrokeButtons>
                                {["描边内", "沿描边", "跨描边"].map((n, i) => (
                                    <button key={n} disabled aria-label={n}>
                                        <svg width="15" height="14" fill="none" stroke="#aaa"><path d="M3 14V3h12" strokeWidth={5 - i} /><path d="M7.500 14V6.500H15" stroke="#888" /></svg>
                                    </button>
                                ))}
                            </StrokeButtons>
                        </Row>
                        <Row $off><span><svg width="15" height="12" fill="none" stroke="#999"><path d="M10 1L1 10.500h11M8 3q3 3 3 7" /></svg></span><OffField label="角度" /></Row>
                        <Row $off><span><svg width="17" height="14" fill="#bbb" stroke="#999"><path d="M2.500 1v11M0 3l2.500-2.500L5 3M0 10l2.500 2.500L5 10M6 13h10" fill="none" /><ellipse cx="11" cy="6" rx="5" ry="4" /></svg></span><OffField label="长宽比" /></Row>
                    </Rows>
                </GradientTop>
                <Ramp><span /><Trash /></Ramp>
                <Rows>
                    <Row $off $label={82}><span>不透明度：</span><OffField label="色标不透明度" /></Row>
                    <Row $off $label={82}><span>位置：</span><OffField label="位置" /></Row>
                </Rows>
            </GradientBody>
        </Panel>
        <Panel $grow>
            <TabBar><Tab $on>图层</Tab><Tab>画板</Tab><PanelMenu /></TabBar>
            <LayersBody>
                <LayerList>
                    <Layer>
                        <LayerCell $w={18}><Eye /></LayerCell>
                        <LayerCell $w={21} />
                        <i /><b />
                        <span>图层 1</span>
                        <LayerCell $w={35} $left $pad={5}><svg width="10" height="10"><circle cx="5" cy="5" r="4" fill="none" stroke="#333" strokeWidth="1.300" /></svg></LayerCell>
                    </Layer>
                </LayerList>
                <LayerFoot>
                    <span>1 个图层</span>
                    <svg width="12" height="12" fill="none" stroke="#999"><circle cx="7.500" cy="4.500" r="4" /><path d="M4 7l-4 4" strokeWidth="2" /></svg>
                    <svg width="11" height="11" fill="none" stroke="#999"><path d="M.5.5h7v7h-7zM3.500 3.500h7v7h-7z" /><path d="M3 3h5v5H3z" fill="#999" /></svg>
                    <svg width="15" height="11" fill="none" stroke="#333" strokeWidth="1.300"><path d="M6 2h8v8h-4L7 7M0 3h5M3 1l2 2-2 2M7 7h4v4" /></svg>
                    <NewIcon />
                    <Trash />
                </LayerFoot>
            </LayersBody>
        </Panel>
    </Panels>
);

const Appearance = () => (
    <Floating>
        <TabBar><Tab $on>外观</Tab><PanelTools><Chevrons flip /><Divider $h={11} /></PanelTools><PanelMenu /></TabBar>
        <AppearanceList>
            <AppearanceRow><i /><b>未选择对象</b></AppearanceRow>
            <AppearanceRow $pad={7} $paint="#111"><Eye /><Caret dir="right" /><BlueText>描边：</BlueText><em />1 pt</AppearanceRow>
            <AppearanceRow $pad={7}><Eye /><Caret dir="right" /><span>填色：</span><em /></AppearanceRow>
            <AppearanceRow />
            <AppearanceRow $h={15} />
        </AppearanceList>
        <AppearanceFoot>
            <svg width="12" height="12" fill="none" stroke="#444" strokeWidth="1.500"><circle cx="6" cy="6" r="5" /><path d="M2.500 2.500l7 7" /></svg>
            <NewIcon color="#a0a0a0" />
            <Trash />
            <Corners />
        </AppearanceFoot>
    </Floating>
);

const Check = ({ checked, children }) => (
    <Choice>
        <CheckBox>
            <input type="checkbox" defaultChecked={checked} />
            {checked && <svg width="13" height="12" fill="none" stroke="#000" strokeWidth="2"><path d="M2 6l3 4 6-9" /></svg>}
        </CheckBox>
        {children}
    </Choice>
);

const Option = ({ name, checked, children }) => (
    <Choice><Radio name={name} defaultChecked={checked} />{children}</Choice>
);

const Preferences = () => (
    <Dialog role="dialog" aria-labelledby="prefs-title">
        <DialogTitle id="prefs-title">首选项</DialogTitle>
        <DialogBody>
            <Sections>
                {sections.map(s => <li key={s} aria-current={s === "用户界面" ? "true" : undefined}>{s}</li>)}
            </Sections>
            <Form onSubmit={e => e.preventDefault()}>
                <Legend>用户界面</Legend>
                <Brightness>
                    <label htmlFor="brightness">亮度 (B)：</label>
                    <Highlight>
                        <SelectWrap $w={184} $h={21} $focus>
                            <select id="brightness"><option>浅色</option></select><i /><Caret w={10} color="#000" />
                        </SelectWrap>
                    </Highlight>
                </Brightness>
                <SliderRow>
                    <Slider>
                        <input type="range" defaultValue="100" aria-label="亮度" />
                        <Between><span>深色</span><span>浅色</span></Between>
                    </Slider>
                    <Field $w={43}><input aria-label="亮度百分比" defaultValue="100%" /></Field>
                </SliderRow>
                <Line><span>画布颜色：</span><Option name="canvas" checked>与用户界面亮度匹配 (M)</Option></Line>
                <Line $indent={66}><Option name="canvas">白色 (W)</Option></Line>
                <Line $top={5}><Check>自动折叠图标面板 (A)</Check></Line>
                <Line $top={6}><Check checked>以选项卡方式打开文档 (O)</Check></Line>
                <Line $top={6}>
                    <Check checked>要获得高 PPI 显示，请缩放用户界面</Check>
                    <svg width="15" height="15" fill="none" stroke="#444"><circle cx="7.500" cy="7.500" r="6.500" /><path d="M6 6.500h2v4.500M6 11.500h4M7 3.500h2" strokeWidth="1.400" /></svg>
                </Line>
                <Line $indent={26} $top={2}><Option name="scale" checked>缩小到支持的较低缩放系数</Option></Line>
                <Line $indent={26}><Option name="scale">放大到支持的较高缩放系数</Option></Line>
                <Rule />
                <Line $top={12}><span>滚动按钮：</span><Option name="scroll" checked>在两端 (E)</Option></Line>
                <Line $indent={66}><Option name="scroll">一起 (T)</Option></Line>
                <Actions>
                    <PushButton $w={92} $h={26} $size={13} $strong>确定</PushButton>
                    <PushButton $w={90} $h={24} $size={13} type="button">取消</PushButton>
                </Actions>
            </Form>
        </DialogBody>
    </Dialog>
);

const SpeedMeter = () => (
    <Meter>
        <MeterBall>48%</MeterBall>
        <MeterPill>
            <div>
                <Speed><Arrow color="#e8553a" />0K/s</Speed>
                <Speed><Arrow color="#1d9a55" down />0K/s</Speed>
            </div>
            <Plus aria-label="加速"><svg width="10" height="10" stroke="#fff" strokeWidth="1.600"><path d="M0 5h10M5 0v10" /></svg></Plus>
        </MeterPill>
    </Meter>
);

const BaiduMark = () => (
    <Watermark>
        <svg width="290" height="144" viewBox="-3 0 290 144" fill="#fff">
            <g fontFamily="Noto Sans, Noto Sans CJK SC, sans-serif" stroke="#aaa" strokeWidth=".5">
                <text x="-3" y="86" fontSize="66" fontWeight="bold" fontFamily="Liberation Sans" stroke="#fff" strokeWidth="1.500">Bai</text>
                <ellipse cx="109" cy="33" rx="11" ry="14" />
                <ellipse cx="129" cy="13" rx="10" ry="14" />
                <ellipse cx="155" cy="15" rx="10" ry="14" transform="rotate(8 155 15)" />
                <ellipse cx="171" cy="39" rx="11" ry="14" />
                <path d="M139 35c-11 0-14 9-21 18-6 7-14 11-13 22 1 10 9 14 18 13 7-1 12-2 16-2s9 1 16 2c10 1 18-3 19-13 0-11-8-15-14-22-6-9-10-18-21-18z" />
                <text x="139" y="79" fontSize="39" fontWeight="bold" textAnchor="middle" fill="#c4c4c4" stroke="#a5a5a5" fontFamily="Liberation Sans">du</text>
                <text x="182" y="83" fontSize="49" fontWeight="bold">经验</text>
                <text x="0" y="125" fontSize="33">jingyan.baidu.com</text>
            </g>
        </svg>
    </Watermark>
);

const App = () => (
    <>
        <GlobalStyle />
        <Window>
            <TopBars />
            <Main>
                <Tools />
                <Split />
                <DocumentArea />
                <Split />
                <Dock />
                <Split />
                <RightPanels />
            </Main>
            <Taskbar>
                <TaskItem $c="#b9dff5" $round><i /></TaskItem>
                <TaskItem $on $c="#d8c08a"><i /></TaskItem>
                <TaskItem $c="#2593f0" $round><i /></TaskItem>
                <TaskItem $c="#c977f7"><i /></TaskItem>
                <TaskItem $c="#1cc3f5"><i /></TaskItem>
                <TaskItem $on $c="#f57e20"><i /></TaskItem>
                <TaskItem $c="#a9d3ec"><i /></TaskItem>
                <TaskItem $c="#2593f0"><i /></TaskItem>
                <Clock>18:30</Clock>
            </Taskbar>
            <TopShade />
            <Appearance />
            <Preferences />
            <SpeedMeter />
            <BaiduMark />
        </Window>
    </>
);

export default App;
